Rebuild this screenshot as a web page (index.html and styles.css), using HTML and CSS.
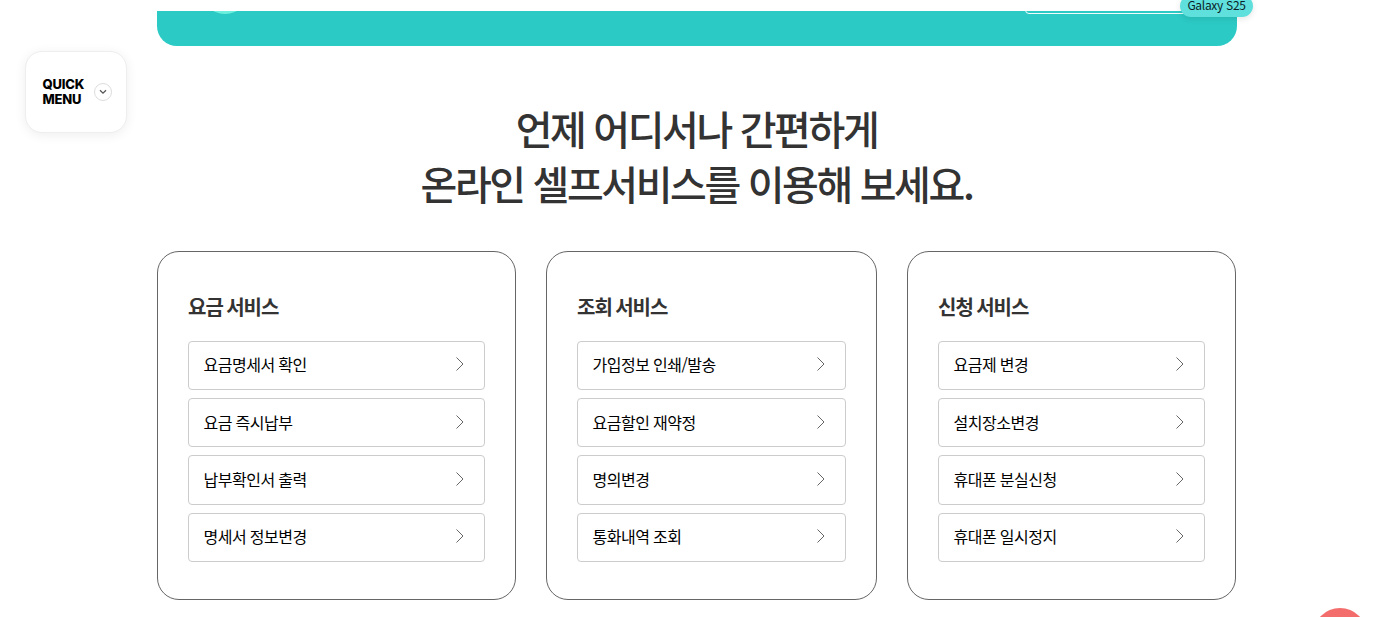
FILE: index.html
```html
<!DOCTYPE html>
<html lang="ko">
<head>
<meta charset="utf-8">
<title>온라인 셀프서비스</title>
<link rel="stylesheet" href="styles.css">
</head>
<body>
<div class="page">
  <section class="banner">
    <div class="banner-clip">
      <span class="banner-dot"></span>
      <span class="banner-input"></span>
    </div>
    <span class="banner-tag">Galaxy S25</span>
  </section>
  <aside class="quick">
    <span class="quick-label">QUICK<br>MENU</span>
    <span class="quick-btn">
      <svg width="8" height="6" viewBox="0 0 8 6"><path d="M1 1.2 4 4.2 7 1.2" fill="none" stroke="#555" stroke-width="1.3"/></svg>
    </span>
  </aside>
  <h1 class="headline">언제 어디서나 간편하게<br>온라인 셀프서비스를 이용해 보세요.</h1>
  <div class="cards">
    <section class="card">
      <h2>요금 서비스</h2>
      <ul>
        <li>요금명세서 확인<svg class="chev" viewBox="0 0 10 16"><path d="M1.5 1.5 8 8 1.5 14.5"/></svg></li>
        <li>요금 즉시납부<svg class="chev" viewBox="0 0 10 16"><path d="M1.5 1.5 8 8 1.5 14.5"/></svg></li>
        <li>납부확인서 출력<svg class="chev" viewBox="0 0 10 16"><path d="M1.5 1.5 8 8 1.5 14.5"/></svg></li>
        <li>명세서 정보변경<svg class="chev" viewBox="0 0 10 16"><path d="M1.5 1.5 8 8 1.5 14.5"/></svg></li>
      </ul>
    </section>
    <section class="card">
      <h2>조회 서비스</h2>
      <ul>
        <li>가입정보 인쇄/발송<svg class="chev" viewBox="0 0 10 16"><path d="M1.5 1.5 8 8 1.5 14.5"/></svg></li>
        <li>요금할인 재약정<svg class="chev" viewBox="0 0 10 16"><path d="M1.5 1.5 8 8 1.5 14.5"/></svg></li>
        <li>명의변경<svg class="chev" viewBox="0 0 10 16"><path d="M1.5 1.5 8 8 1.5 14.5"/></svg></li>
        <li>통화내역 조회<svg class="chev" viewBox="0 0 10 16"><path d="M1.5 1.5 8 8 1.5 14.5"/></svg></li>
      </ul>
    </section>
    <section class="card">
      <h2>신청 서비스</h2>
      <ul>
        <li>요금제 변경<svg class="chev" viewBox="0 0 10 16"><path d="M1.5 1.5 8 8 1.5 14.5"/></svg></li>
        <li>설치장소변경<svg class="chev" viewBox="0 0 10 16"><path d="M1.5 1.5 8 8 1.5 14.5"/></svg></li>
        <li>휴대폰 분실신청<svg class="chev" viewBox="0 0 10 16"><path d="M1.5 1.5 8 8 1.5 14.5"/></svg></li>
        <li>휴대폰 일시정지<svg class="chev" viewBox="0 0 10 16"><path d="M1.5 1.5 8 8 1.5 14.5"/></svg></li>
      </ul>
    </section>
  </div>
  <span class="fab"></span>
</div>
</body>
</html>
```
FILE: styles.css
```css
* { box-sizing: border-box; }
html, body { margin: 0; padding: 0; height: 617px; overflow: hidden; background: #fff; }
body { font-family: "Noto Sans CJK KR", "Noto Sans", sans-serif; color: #333; }
.page { position: relative; width: 1380px; height: 617px; overflow: hidden; padding-top: 11px; }

.banner { position: relative; width: 1080px; height: 35px; margin-left: 157px; }
.banner-clip { position: relative; width: 100%; height: 100%; overflow: hidden; background: #2ccac5; border-radius: 0 0 20px 20px; }
.banner-dot { position: absolute; left: 43px; top: -47.5px; width: 50px; height: 50px; border-radius: 50%; background: #6ef0de; }
.banner-input { position: absolute; left: 868px; top: -30px; width: 175px; height: 33px; border: 1px solid #f2fbfa; border-radius: 4px; }
.banner-tag { position: absolute; left: 1023px; top: -16px; width: 73px; height: 22px; border-radius: 11px; background: #5fe0dc; color: #0a1f28; font-size: 12px; line-height: 19px; text-align: center; letter-spacing: -0.3px; box-shadow: 0 2px 6px rgba(0,0,0,.1); }

.quick { position: absolute; left: 25px; top: 51px; width: 102px; height: 82px; background: #fff; border: 1px solid #eee; border-radius: 17px; box-shadow: 0 2px 12px rgba(0,0,0,.07); }
.quick-label { position: absolute; left: 16.5px; top: 25px; font-family: "Inter", sans-serif; font-weight: 800; font-size: 13px; line-height: 15px; color: #000; letter-spacing: -0.2px; }
.quick-btn { position: absolute; left: 68px; top: 31px; width: 18px; height: 18px; border: 1px solid #ddd; border-radius: 50%; display: flex; align-items: center; justify-content: center; }

.headline { margin: 55px 0 0 0; text-align: center; width: 1393px; font-size: 40px; line-height: 55px; font-weight: 500; letter-spacing: -2.4px; color: #333; }

.cards { display: grid; grid-template-columns: 359px 331px 329px; gap: 30px; margin: 40px 0 0 157px; }
.card { height: 349px; border: 1px solid #666; border-radius: 22px; padding: 40px 30px 0; }
.card h2 { margin: 0 0 18.7px; font-size: 20px; line-height: 30px; font-weight: 700; letter-spacing: -1px; word-spacing: -1.2px; color: #333; }
.card ul { list-style: none; margin: 0; padding: 0; display: flex; flex-direction: column; gap: 8px; }
.card li { display: flex; align-items: center; justify-content: space-between; height: 49.33px; padding: 0 19px 2px 14.6px; border: 1px solid #ccc; border-radius: 4px; font-size: 16px; letter-spacing: -0.5px; word-spacing: -0.5px; color: #000; }
.chev { width: 10px; height: 16px; fill: none; stroke: #666; stroke-width: 1; }

.fab { position: absolute; left: 1313px; top: 608px; width: 54px; height: 54px; border-radius: 50%; background: #f46d6d; }
```
